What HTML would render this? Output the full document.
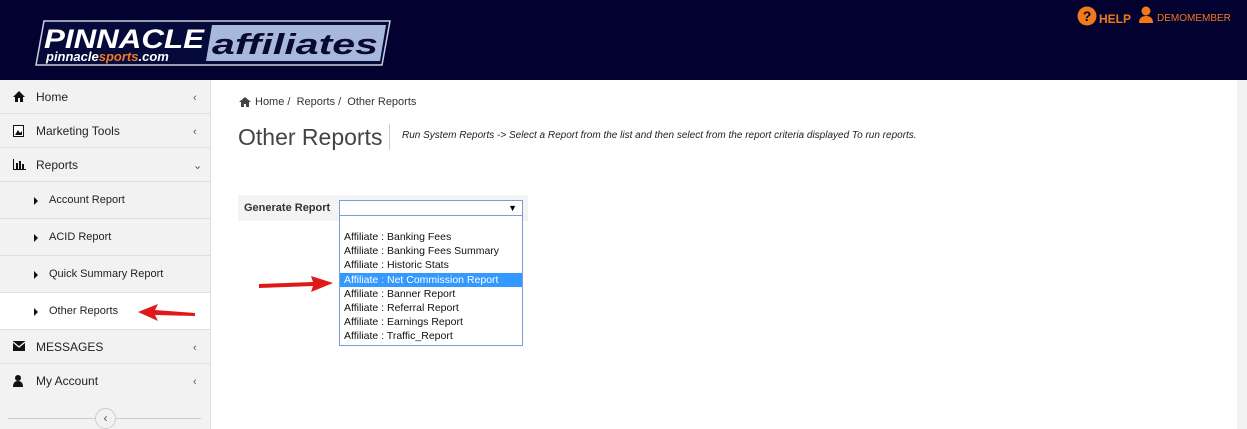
<!DOCTYPE html>
<html><head><style>
*{margin:0;padding:0;box-sizing:border-box}
body{width:1247px;height:429px;overflow:hidden;background:#fff;font-family:"Liberation Sans",Arial,sans-serif;position:relative}
.hdr{position:absolute;left:0;top:0;width:1247px;height:80px;background:#03012f}
.side{position:absolute;left:0;top:80px;width:211px;height:349px;background:#f2f2f2;border-right:1px solid #e0e0e0}
.it{height:34px;border-bottom:1px solid #dedede;font-size:12px;color:#222;position:relative;line-height:34px;padding-left:36px}
.sub{height:37px;line-height:37px;padding-left:49px;font-size:11px}
.it svg.ic{position:absolute;left:13px;top:11px}
.it .ch{position:absolute;left:193px;top:1px;font-size:11px;color:#555}
.sub .tri{position:absolute;left:34px;top:15px;width:0;height:0;border-left:4px solid #111;border-top:4px solid transparent;border-bottom:4px solid transparent}
.abs{position:absolute}
</style></head><body>
<div class="hdr">
<svg class="abs" style="left:30px;top:18px" width="362" height="50">
<polygon points="6,47 14,3 360,3 352,47" fill="#050a3a" stroke="#c9cfe0" stroke-width="1.5"/>
<polygon points="182,7 356,7 350,43 176,43" fill="#a8b8dc"/>
<text x="14" y="30" font-family="Liberation Sans" font-weight="bold" font-style="italic" font-size="27" fill="#fff" textLength="160" lengthAdjust="spacingAndGlyphs">PINNACLE</text>
<text x="16" y="43" font-family="Liberation Sans" font-weight="bold" font-style="italic" font-size="13" fill="#fff">pinnacle<tspan fill="#f07a20">sports</tspan>.com</text>
<text x="182" y="36" font-family="Liberation Sans" font-weight="bold" font-style="italic" font-size="29" fill="#0a0a30" textLength="166" lengthAdjust="spacingAndGlyphs">affiliates</text>
</svg>
<svg class="abs" style="left:1077px;top:6px" width="20" height="20"><circle cx="10" cy="10" r="9.5" fill="#f07a18"/><text x="10" y="15" text-anchor="middle" font-weight="bold" font-size="14" fill="#03012f" font-family="Liberation Sans">?</text></svg>
<div class="abs" style="left:1099px;top:12px;color:#f07a18;font-size:12px;font-weight:bold">HELP</div>
<svg class="abs" style="left:1138px;top:6px" width="16" height="18"><circle cx="8" cy="5" r="4.5" fill="#f07a18"/><path d="M1 17 Q1 10 8 10 Q15 10 15 17Z" fill="#f07a18"/></svg>
<div class="abs" style="left:1157px;top:13px;color:#f07a18;font-size:10px">DEMOMEMBER</div>
</div>
<div class="abs" style="left:1237px;top:80px;width:10px;height:349px;background:#f2f2f2"></div>
<div class="side">
<div class="it"><svg class="ic" width="12" height="11"><path d="M0 6 L6 0 L12 6 L10 6 L10 11 L7 11 L7 7 L5 7 L5 11 L2 11 L2 6Z" fill="#111"/></svg>Home<span class="ch">&lsaquo;</span></div>
<div class="it"><svg class="ic" width="11" height="12"><rect x="0.5" y="0.5" width="10" height="11" fill="#fff" stroke="#111"/><path d="M2 10 L5 5 L7 8 L9 6 L9 10Z" fill="#111"/></svg>Marketing Tools<span class="ch">&lsaquo;</span></div>
<div class="it"><svg class="ic" width="13" height="11"><path d="M0.5 0 V10.5 H13" stroke="#111" fill="none"/><rect x="3" y="4" width="2" height="6" fill="#111"/><rect x="6" y="2" width="2" height="8" fill="#111"/><rect x="9" y="5" width="2" height="5" fill="#111"/></svg>Reports<span class="ch">&#8964;</span></div>
<div class="it sub"><span class="tri"></span>Account Report</div>
<div class="it sub"><span class="tri"></span>ACID Report</div>
<div class="it sub"><span class="tri"></span>Quick Summary Report</div>
<div class="it sub" style="background:#fff"><span class="tri"></span>Other Reports</div>
<div class="it"><svg class="ic" width="12" height="10"><rect width="12" height="10" fill="#111"/><path d="M0 1 L6 6 L12 1" stroke="#f2f2f2" stroke-width="1.3" fill="none"/></svg>MESSAGES<span class="ch">&lsaquo;</span></div>
<div class="it" style="border-bottom:none"><svg class="ic" width="10" height="12"><circle cx="5" cy="3" r="3" fill="#111"/><path d="M0 12 Q0 6 5 6 Q10 6 10 12Z" fill="#111"/></svg>My Account<span class="ch">&lsaquo;</span></div>
<div class="abs" style="left:8px;top:338px;width:193px;border-top:1px solid #ccc"></div>
<div class="abs" style="left:95px;top:328px;width:21px;height:21px;border-radius:50%;background:#f2f2f2;border:1px solid #ccc;text-align:center;font-size:12px;line-height:18px;color:#555">&lsaquo;</div>
</div>
<svg class="abs" style="left:130px;top:302px" width="70" height="20"><path d="M8 10 L28 2 L25 8 L65 11 L65 14 L25 13 L28 19Z" fill="#e01818"/></svg>
<svg class="abs" style="left:239px;top:97px" width="12" height="10"><path d="M0 5 L6 0 L12 5 L10 5 L10 10 L7 10 L7 7 L5 7 L5 10 L2 10 L2 5Z" fill="#444"/></svg>
<div class="abs" style="left:255px;top:96px;font-size:11px;color:#333">Home&nbsp;/&nbsp; Reports&nbsp;/&nbsp; Other Reports</div>
<div class="abs" style="left:238px;top:124px;font-size:23px;color:#444">Other Reports</div>
<div class="abs" style="left:389px;top:124px;height:26px;border-left:1px solid #ccc"></div>
<div class="abs" style="left:402px;top:130px;font-size:10px;font-style:italic;color:#222">Run System Reports -&gt; Select a Report from the list and then select from the report criteria displayed To run reports.</div>
<div class="abs" style="left:238px;top:195px;width:290px;height:26px;background:#f3f3f3"></div>
<div class="abs" style="left:244px;top:202px;font-size:11px;font-weight:bold;color:#333">Generate Report</div>
<div class="abs" style="left:339px;top:200px;width:184px;height:16px;border:1px solid #7a9cd8;background:#fff;font-size:9px;text-align:right;padding-right:5px;line-height:15px">&#9660;</div>
<div class="abs" style="left:339px;top:216px;width:184px;height:130px;border:1px solid #7a9cd8;border-top:none;background:#fff;font-size:10.5px;color:#111;padding-top:14px;line-height:14.2px">
<div style="padding-left:4px">Affiliate : Banking Fees</div>
<div style="padding-left:4px">Affiliate : Banking Fees Summary</div>
<div style="padding-left:4px">Affiliate : Historic Stats</div>
<div style="padding-left:4px;background:#3399ff;color:#fff">Affiliate : Net Commission Report</div>
<div style="padding-left:4px">Affiliate : Banner Report</div>
<div style="padding-left:4px">Affiliate : Referral Report</div>
<div style="padding-left:4px">Affiliate : Earnings Report</div>
<div style="padding-left:4px">Affiliate : Traffic_Report</div>
</div>
<svg class="abs" style="left:255px;top:272px" width="82" height="22"><path d="M4 12 L58 10 L56 4 L78 11 L56 20 L58 14 L4 16Z" fill="#e01818"/></svg>
</body></html>
